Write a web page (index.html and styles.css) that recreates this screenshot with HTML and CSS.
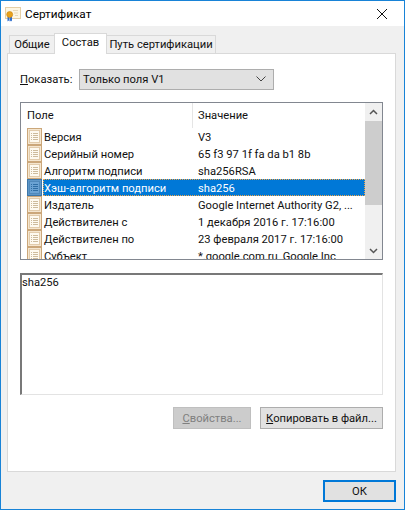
FILE: index.html
```html
<!DOCTYPE html>
<html lang="ru">
<head>
<meta charset="utf-8">
<title>Сертификат</title>
<link rel="stylesheet" href="styles.css">
</head>
<body>
<svg class="defs" width="0" height="0" aria-hidden="true">
  <symbol id="field" viewBox="0 0 15 17">
    <rect x="0.5" y="0.5" width="14" height="16" fill="var(--i-edge)" stroke="var(--i-line)"/>
    <rect x="2.5" y="2.5" width="10" height="12" fill="var(--i-paper)" stroke="var(--i-line)" stroke-opacity="0.5"/>
    <path d="M4 5.5h1M6 5.5h5M4 7.5h1M6 7.5h5M4 9.5h1M6 9.5h5M4 11.5h1M6 11.5h5" stroke="var(--i-text)" fill="none"/>
  </symbol>
</svg>
<div class="window">
  <header class="titlebar">
    <svg class="cert" viewBox="0 0 16 16" width="16" height="16" aria-hidden="true">
      <rect x="0.5" y="1.5" width="15" height="11" fill="#fdf6e3" stroke="#e5cfa6"/>
      <path d="M8 4.5h5M9 7h4M10 9.500h3" stroke="#e6d7b8" fill="none"/>
      <path d="M2.500 11h2v4.500l-1-1-1 1zM5 11h2v4.500l-1-1-1 1z" fill="#2f6fcf"/>
      <circle cx="4.700" cy="8.500" r="3" fill="#e8a21c" stroke="#c9820e" stroke-width="0.600"/>
    </svg>
    <span class="title">Сертификат</span>
    <svg class="close" viewBox="0 0 10 10" width="10" height="10" aria-hidden="true">
      <path d="M0 0L10 10M10 0L0 10" stroke="#111" stroke-width="1" fill="none"/>
    </svg>
  </header>

  <div class="content">
    <nav class="tabs">
      <span class="tab">Общие</span>
      <span class="tab active">Состав</span>
      <span class="tab">Путь сертификации</span>
    </nav>

    <section class="panel">
      <div class="show">
        <label class="show-label"><u>П</u>оказать:</label>
        <div class="select">
          <span>Только поля V1</span>
          <svg viewBox="0 0 10 6" width="10" height="6" aria-hidden="true"><path d="M0.500 0.500L5 5L9.500 0.500" stroke="#444" fill="none"/></svg>
        </div>
      </div>

      <div class="list">
        <div class="list-main">
          <div class="list-head">
            <span class="col-name">Поле</span>
            <span class="col-value">Значение</span>
          </div>
          <div class="row"><svg class="ico"><use href="#field"/></svg><div class="cells"><span class="c1">Версия</span><span class="c2">V3</span></div></div>
          <div class="row"><svg class="ico"><use href="#field"/></svg><div class="cells"><span class="c1">Серийный номер</span><span class="c2">65 f3 97 1f fa da b1 8b</span></div></div>
          <div class="row"><svg class="ico"><use href="#field"/></svg><div class="cells"><span class="c1">Алгоритм подписи</span><span class="c2">sha256RSA</span></div></div>
          <div class="row selected"><svg class="ico"><use href="#field"/></svg><div class="cells"><span class="c1">Хэш-алгоритм подписи</span><span class="c2">sha256</span></div></div>
          <div class="row"><svg class="ico"><use href="#field"/></svg><div class="cells"><span class="c1">Издатель</span><span class="c2">Google Internet Authority G2, ...</span></div></div>
          <div class="row"><svg class="ico"><use href="#field"/></svg><div class="cells"><span class="c1">Действителен с</span><span class="c2">1 декабря 2016 г. 17:16:00</span></div></div>
          <div class="row"><svg class="ico"><use href="#field"/></svg><div class="cells"><span class="c1">Действителен по</span><span class="c2">23 февраля 2017 г. 17:16:00</span></div></div>
          <div class="row"><svg class="ico"><use href="#field"/></svg><div class="cells"><span class="c1">Субъект</span><span class="c2">*.google.com.ru, Google Inc,</span></div></div>
        </div>
        <div class="scrollbar">
          <div class="sb-btn"><svg viewBox="0 0 9 6" width="9" height="6" aria-hidden="true"><path d="M1 5L4.500 1.500L8 5" stroke="#555" stroke-width="1.500" fill="none"/></svg></div>
          <div class="sb-thumb"></div>
          <div class="sb-track"></div>
          <div class="sb-btn"><svg viewBox="0 0 9 6" width="9" height="6" aria-hidden="true"><path d="M1 1L4.500 4.500L8 1" stroke="#555" stroke-width="1.500" fill="none"/></svg></div>
        </div>
      </div>

      <div class="detail">sha256</div>

      <div class="actions">
        <button class="btn disabled" type="button"><u>С</u>войства...</button>
        <button class="btn copy" type="button"><u>К</u>опировать в файл...</button>
      </div>
    </section>

    <footer class="footer">
      <button class="btn ok" type="button">ОК</button>
    </footer>
  </div>
</div>
</body>
</html>
```

FILE: styles.css
```css
html, body {
  margin: 0;
  padding: 0;
}

body {
  width: 405px;
  height: 510px;
  overflow: hidden;
  font-family: Roboto, "Noto Sans", sans-serif;
  font-size: 11.2px;
  color: #111;
  --i-edge: #f5e6cf;
  --i-line: #cba77a;
  --i-paper: #fefaf0;
  --i-text: #cdbb9c;
}

.defs {
  display: block;
  height: 0;
}

.window {
  box-sizing: border-box;
  width: 405px;
  height: 510px;
  border: 1px solid #1883d7;
  display: flex;
  flex-direction: column;
  background: #f0f0f0;
}

.titlebar {
  height: 25px;
  flex: none;
  background: #fff;
  display: flex;
  align-items: center;
  padding: 0 17px 0 4px;
}

.cert {
  flex: none;
  margin-right: 4px;
}

.title {
  flex: 1;
  font-size: 11.8px;
  color: #000;
}

.close {
  flex: none;
}

.content {
  flex: 1;
  display: flex;
  flex-direction: column;
  padding: 7px 8px 0 6px;
  min-height: 0;
}

.tabs {
  display: flex;
  align-items: flex-end;
  height: 20px;
  padding-left: 2px;
  flex: none;
}

.tab {
  box-sizing: border-box;
  height: 18px;
  line-height: 18px;
  border: 1px solid #d9d9d9;
  border-bottom: 0;
  text-align: center;
  background: #f0f0f0;
  margin-left: -1px;
  white-space: nowrap;
}

.tab:nth-child(1) {
  width: 46px;
  margin-left: 0;
}

.tab:nth-child(2) {
  width: 53px;
}

.tab:nth-child(3) {
  width: 110px;
}

.tab.active {
  position: relative;
  height: 21px;
  line-height: 18px;
  background: #fff;
  margin-bottom: -1px;
  z-index: 1;
}

.panel {
  flex: none;
  box-sizing: border-box;
  height: 419px;
  background: #fff;
  border: 1px solid #d9d9d9;
  padding: 14px 12px 0 12px;
  display: flex;
  flex-direction: column;
}

.show {
  display: flex;
  align-items: center;
  height: 22px;
  flex: none;
}

.show-label {
  width: 59px;
  flex: none;
}

.select {
  box-sizing: border-box;
  width: 195px;
  height: 21px;
  background: #e1e1e1;
  border: 1px solid #adadad;
  display: flex;
  align-items: center;
  justify-content: space-between;
  padding: 0 3px 0 3px;
}

.select svg {
  margin-right: 4px;
}

.list {
  box-sizing: border-box;
  margin-top: 12px;
  height: 158px;
  border: 1px solid #828790;
  display: flex;
  flex: none;
  overflow: hidden;
}

.list-main {
  flex: 1;
  min-width: 0;
  overflow: hidden;
}

.list-head {
  display: flex;
  height: 25px;
  align-items: center;
}

.col-name {
  box-sizing: border-box;
  width: 172px;
  padding-left: 6px;
  height: 25px;
  line-height: 26px;
  border-right: 1px solid #e5e5e5;
}

.col-value {
  padding-left: 5px;
  line-height: 26px;
}

.row {
  display: flex;
  height: 17px;
  align-items: center;
  padding-left: 6px;
}

.ico {
  width: 15px;
  height: 17px;
  flex: none;
}

.cells {
  box-sizing: border-box;
  flex: 1;
  display: flex;
  height: 17px;
  line-height: 17px;
  border: 1px solid transparent;
  margin-left: 1px;
  min-width: 0;
}

.c1 {
  width: 154px;
  flex: none;
  white-space: nowrap;
  padding-left: 0;
}

.c2 {
  white-space: nowrap;
}

.row.selected {
  --i-edge: #5d97c9;
  --i-line: #3d76a8;
  --i-paper: #6ba3d4;
  --i-text: #2f6ea5;
}

.row.selected .cells {
  background: #0078d7;
  color: #fff;
  border: 1px dotted #f0a64a;
}

.scrollbar {
  width: 17px;
  flex: none;
  background: #f0f0f0;
  display: flex;
  flex-direction: column;
}

.sb-btn {
  height: 17px;
  flex: none;
  display: flex;
  align-items: center;
  justify-content: center;
}

.sb-thumb {
  height: 84px;
  flex: none;
  margin-top: 1px;
  background: #cdcdcd;
}

.sb-track {
  flex: 1;
}

.detail {
  box-sizing: border-box;
  flex: none;
  margin-top: 13px;
  height: 122px;
  padding: 0 0;
  border-style: solid;
  border-width: 2px 1px 1px 2px;
  border-color: #787878 #e3e3e3 #e3e3e3 #787878;
  line-height: 16px;
}

.actions {
  display: flex;
  justify-content: flex-end;
  gap: 9px;
  margin-top: 12px;
  flex: none;
}

.btn {
  box-sizing: border-box;
  height: 22px;
  padding: 0;
  font: inherit;
  color: #111;
  background: #e1e1e1;
  border: 1px solid #adadad;
}

.btn.disabled {
  width: 78px;
  background: #ccc;
  border-color: #bfbfbf;
  color: #7f7f7f;
}

.btn.copy {
  width: 123px;
}

.footer {
  flex: 1;
  display: flex;
  justify-content: flex-end;
  padding-top: 8px;
}

.btn.ok {
  width: 73px;
  height: 22px;
  border: 2px solid #0078d7;
}
```
